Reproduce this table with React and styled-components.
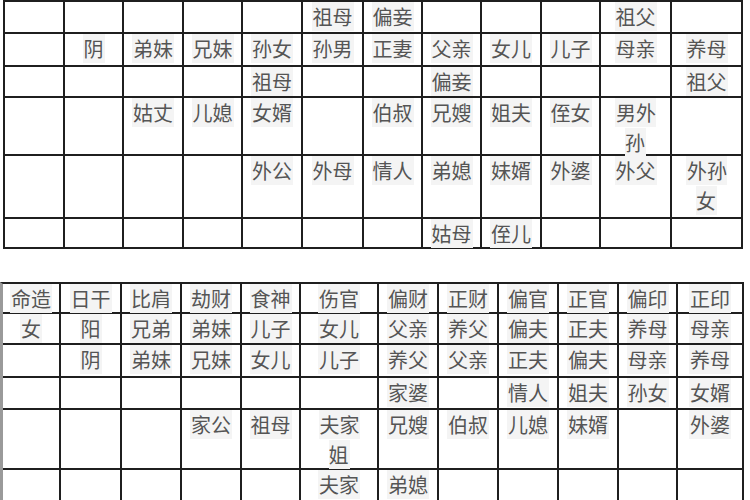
import React from "react";
import styled, { createGlobalStyle } from "styled-components";

const GlobalStyle = createGlobalStyle`
  body {
    margin: 0;
    background: #ffffff;
  }
`;

const Page = styled.div`
  width: 750px;
  height: 500px;
  overflow: hidden;
  background: #ffffff;
  font-family: "Noto Sans CJK SC", "Noto Sans", sans-serif;
`;

const Grid = styled.div`
  display: grid;
  grid-template-columns: ${p => p.cols.map(c => c + "px").join(" ")};
  grid-template-rows: ${p => p.rows.map(r => r + "px").join(" ")};
  width: max-content;
  margin-left: ${p => p.offset}px;
  margin-top: ${p => p.top}px;
  border-top: 2px solid #1f1f1f;
  border-left: ${p => p.edge};
`;

const Cell = styled.div`
  box-sizing: border-box;
  border-right: 2px solid #1f1f1f;
  border-bottom: 2px solid #1f1f1f;
  text-align: center;
  white-space: pre-line;
  font-size: 20px;
  line-height: 30px;
  color: #555555;
  overflow: visible;
`;

const Label = styled.span`
  background: #f4f4f4;
  padding: 0 1px;
`;

// first table (top, cut off above)
const topCols = [60, 59, 60, 59, 60, 61, 59, 59, 60, 59, 71, 71];
const topRows = [32, 33, 31, 58, 63, 30];
const topData = [
  ["", "", "", "", "", "祖母", "偏妾", "", "", "", "祖父", ""],
  ["", "阴", "弟妹", "兄妹", "孙女", "孙男", "正妻", "父亲", "女儿", "儿子", "母亲", "养母"],
  ["", "", "", "", "祖母", "", "", "偏妾", "", "", "", "祖父"],
  ["", "", "姑丈", "儿媳", "女婿", "", "伯叔", "兄嫂", "姐夫", "侄女", "男外\n孙", ""],
  ["", "", "", "", "外公", "外母", "情人", "弟媳", "妹婿", "外婆", "外父", "外孙\n女"],
  ["", "", "", "", "", "", "", "姑母", "侄儿", "", "", ""]
];

// second table (female chart)
const bottomCols = [58, 61, 60, 60, 59, 78, 60, 60, 60, 60, 59, 66];
const bottomRows = [30, 31, 33, 32, 60, 60];
const bottomData = [
  ["命造", "日干", "比肩", "劫财", "食神", "伤官", "偏财", "正财", "偏官", "正官", "偏印", "正印"],
  ["女", "阳", "兄弟", "弟妹", "儿子", "女儿", "父亲", "养父", "偏夫", "正夫", "养母", "母亲"],
  ["", "阴", "弟妹", "兄妹", "女儿", "儿子", "养父", "父亲", "正夫", "偏夫", "母亲", "养母"],
  ["", "", "", "", "", "", "家婆", "", "情人", "姐夫", "孙女", "女婿"],
  ["", "", "", "家公", "祖母", "夫家\n姐", "兄嫂", "伯叔", "儿媳", "妹婿", "", "外婆"],
  ["", "", "", "", "", "夫家", "弟媳", "", "", "", "", ""]
];

const Chart = ({ cols, rows, data, offset, top, edge }) => (
  <Grid cols={cols} rows={rows} offset={offset} top={top} edge={edge}>
    {data.map((row, r) =>
      row.map((text, c) => (
        <Cell key={r + "-" + c}>{text && <Label>{text}</Label>}</Cell>
      ))
    )}
  </Grid>
);

export default function App() {
  return (
    <Page>
      <GlobalStyle />
      <Chart
        cols={topCols}
        rows={topRows}
        data={topData}
        offset={3}
        top={0}
        edge="2px solid #1f1f1f"
      />
      <Chart
        cols={bottomCols}
        rows={bottomRows}
        data={bottomData}
        offset={0}
        top={33}
        edge="3px solid #9a9a9a"
      />
    </Page>
  );
}
